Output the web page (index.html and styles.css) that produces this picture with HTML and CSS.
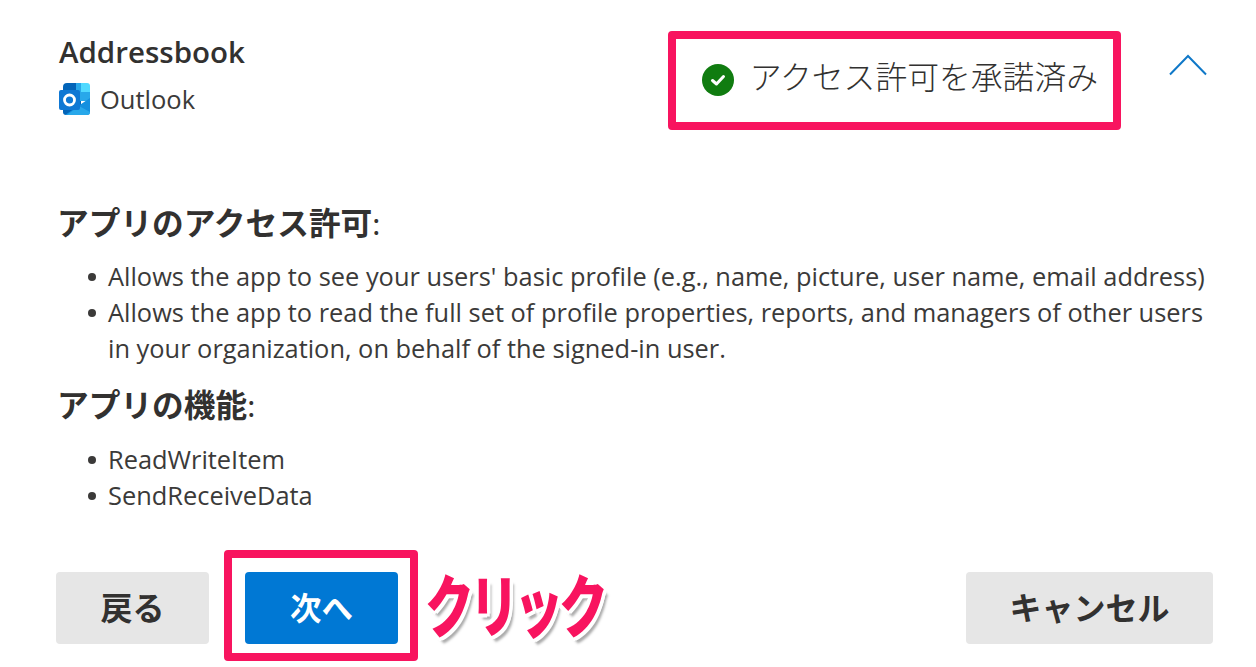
FILE: index.html
```html
<!DOCTYPE html>
<html lang="ja">
<head>
<meta charset="utf-8">
<title>Addressbook</title>
<link rel="stylesheet" href="styles.css">
</head>
<body>
<main class="panel">
  <header class="head">
    <div class="app">
      <h1 class="app-name">Addressbook</h1>
      <div class="app-host">
        <svg class="outlook" viewBox="0 0 32 32" aria-hidden="true">
          <path fill="#0364b8" d="M8 0h9v9H4V4a4 4 0 0 1 4-4z"/>
          <path fill="#28a8ea" d="M17 0h5v9h-5z"/>
          <path fill="#50d9ff" d="M22 0h6a3 3 0 0 1 3 3v6h-9z"/>
          <path fill="#0078d4" d="M4 9h13v9H4z"/>
          <path fill="#28a8ea" d="M17 9h14v9H17z"/>
          <path fill="#0364b8" d="M4 18h18v14H7a3 3 0 0 1-3-3z"/>
          <path fill="#1490df" d="M6 32L31 15v14a3 3 0 0 1-3 3z"/>
          <path fill="#28a8ea" d="M8 32l12-9 11 6v0a3 3 0 0 1-3 3z"/>
          <rect fill="#0f78d4" x="0" y="7" width="21" height="20" rx="2"/>
          <circle cx="10.500" cy="17" r="5" fill="none" stroke="#fff" stroke-width="2.800"/>
        </svg>
        <span>Outlook</span>
      </div>
    </div>
    <div class="status">
      <svg class="check" viewBox="0 0 32 32" aria-hidden="true">
        <circle cx="16" cy="16" r="16" fill="#107c10"/>
        <path d="M10.500 16.500l4 3.500 7-7.500" fill="none" stroke="#fff" stroke-width="3" stroke-linecap="round" stroke-linejoin="round"/>
      </svg>
      <span class="status-text">アクセス許可を承諾済み</span>
      <div class="mark mark-status"></div>
    </div>
    <svg class="chevron" viewBox="0 0 38 22" aria-hidden="true">
      <path d="M1 20.500L19 2l18 18.500" fill="none" stroke="#0f78c8" stroke-width="2"/>
    </svg>
  </header>

  <section class="perm">
    <h2 class="perm-title"><b>アプリのアクセス許可</b>:</h2>
    <ul class="perm-list">
      <li>Allows the app to see your users' basic profile (e.g., name, picture, user name, email address)</li>
      <li>Allows the app to read the full set of profile properties, reports, and managers of other users in your organization, on behalf of the signed-in user.</li>
    </ul>
    <h2 class="perm-title second"><b>アプリの機能</b>:</h2>
    <ul class="perm-list">
      <li>ReadWriteItem</li>
      <li>SendReceiveData</li>
    </ul>
  </section>

  <footer class="actions">
    <button class="btn">戻る</button>
    <div class="next-wrap">
      <button class="btn primary">次へ</button>
      <div class="mark mark-next"></div>
      <span class="note">クリック</span>
    </div>
    <button class="btn cancel">キャンセル</button>
  </footer>
</main>
</body>
</html>
```

FILE: styles.css
```css
* { box-sizing: border-box; }
html, body { margin: 0; height: 100%; background: #fff; overflow: hidden; }
body {
  font-family: "Open Sans", "Noto Sans CJK JP", sans-serif;
  color: #323130;
}
.panel { width: 1256px; height: 667px; padding: 30px 43px 0 59px; display: flex; flex-direction: column; }

.head { display: flex; align-items: flex-start; height: 134px; flex: none; }
.app { flex: 1; }
.app-name { margin: 0; font-size: 29.500px; line-height: 44px; font-weight: 600; }
.app-host { display: flex; align-items: center; gap: 9px; margin-top: 7px; font-size: 25.500px; line-height: 36px; color: #3b3a39; }
.outlook { width: 32px; height: 32px; display: block; }

.status { position: relative; display: flex; align-items: center; gap: 16px; height: 34px; margin-top: 33px; margin-right: 71px; font-size: 31.800px; font-family: "Noto Sans CJK JP", sans-serif; font-weight: 300; white-space: nowrap; }
.status-text { margin-top: -10px; }
.check { width: 32px; height: 32px; flex: none; }
.chevron { width: 38px; height: 22px; margin-top: 24px; margin-right: 6px; flex: none; }

.mark { position: absolute; border: 8px solid #f8145f; border-radius: 4px; pointer-events: none; }
.mark-status { left: -34px; top: -32px; width: 453px; height: 99px; }
.mark-next { left: -21px; top: -22px; width: 194px; height: 111px; }

.perm { height: 408px; flex: none; padding-top: 35px; }
.perm-title { margin: 0 0 0 -2px; font-size: 29px; line-height: 44px; font-weight: 400; font-family: "Noto Sans CJK JP", sans-serif; }
.perm-title b { font-weight: 700; font-size: 31.700px; }
.perm-title.second { margin-top: 15px; }
.perm-list { margin: 14px 0 0; padding: 0 0 0 29px; list-style: none; font-size: 25.400px; line-height: 36px; color: #3b3a39; }
.second + .perm-list { margin-top: 15px; }
.perm-list li { display: grid; grid-template-columns: 20px 1fr; }
.perm-list li::before { content: ""; width: 8px; height: 8px; margin-top: 15px; border-radius: 50%; background: #3b3a39; }

.actions { display: flex; align-items: center; margin-left: -3px; flex: none; }
.btn { height: 72px; width: 153px; border: 0; border-radius: 4px; background: #e6e6e6; color: #323130; font: 700 32px "Noto Sans CJK JP", sans-serif; padding: 0 0 4px; }
.next-wrap { position: relative; margin-left: 36px; }
.primary { display: block; background: #0078d4; color: #fff; font-size: 31.500px; }
.cancel { width: 247px; margin-left: auto; }
.note { position: absolute; left: 180px; top: -11px; font: 900 68px/84px "Noto Sans CJK JP", sans-serif; letter-spacing: -6px; color: #f8145f; white-space: nowrap; transform: scaleX(.72); transform-origin: left center; text-shadow: 5px 0 0 #fff, -5px 0 0 #fff, 0 4px 0 #fff, 0 -4px 0 #fff, 4px 3px 0 #fff, -4px 3px 0 #fff, 4px -3px 0 #fff, -4px -3px 0 #fff, 6px 6px 3px #aaa; }
```
